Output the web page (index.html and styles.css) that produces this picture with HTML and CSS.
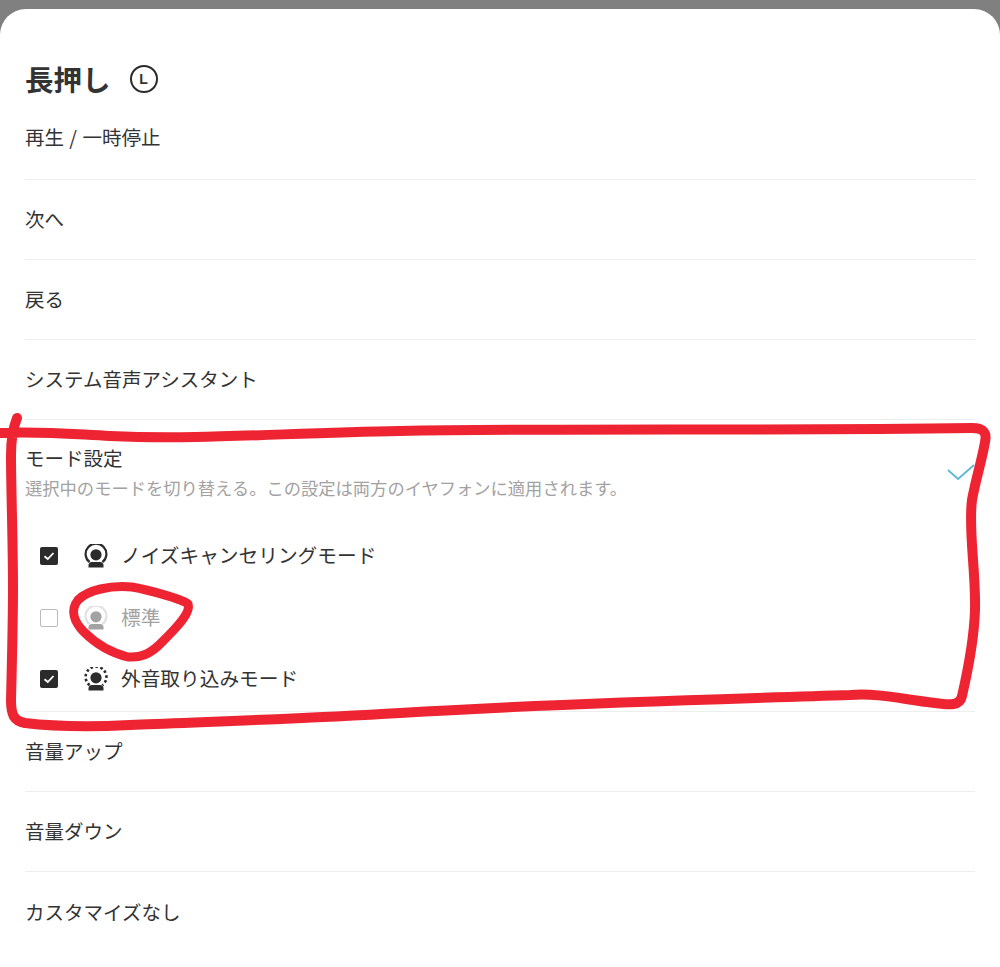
FILE: index.html
```html
<!DOCTYPE html>
<html lang="ja">
<head>
  <meta charset="UTF-8">
  <meta name="viewport" content="width=device-width, initial-scale=1.0">
  <title>長押し</title>
  <link rel="stylesheet" href="styles.css">
</head>
<body>
  <div class="sheet">
    <div class="header">
      <h1>長押し</h1>
      <span class="side-badge">L</span>
    </div>

    <div class="row first-row">再生 / 一時停止</div>
    <div class="row">次へ</div>
    <div class="row">戻る</div>
    <div class="row">システム音声アシスタント</div>

    <div class="row mode-row">
      <div class="mode-title">モード設定</div>
      <div class="mode-desc">選択中のモードを切り替える。この設定は両方のイヤフォンに適用されます。</div>
      <svg class="selected-check" width="30" height="22" viewBox="0 0 30 22">
        <path d="M1 6 L11 15 L27 1" fill="none" stroke="#5bb8d6" stroke-width="1.8"/>
      </svg>

      <div class="options">
        <div class="option">
          <span class="checkbox checked">
            <svg width="14" height="14" viewBox="0 0 14 14"><path d="M2.5 7.2 L5.8 10 L11.5 4" fill="none" stroke="#fff" stroke-width="1.8"/></svg>
          </span>
          <svg class="mode-icon" width="24" height="24" viewBox="0 0 24 24">
            <path d="M5.6 18.2 A10.4 10.4 0 1 1 18.4 18.2" fill="none" stroke="#2b2b2b" stroke-width="2.2"/>
            <circle cx="12" cy="10.8" r="5.6" fill="#2b2b2b"/>
            <path d="M4.5 23.5 V21.5 Q4.5 18 8 18 H16 Q19.5 18 19.5 21.5 V23.5 Z" fill="#2b2b2b"/>
          </svg>
          <span class="option-label">ノイズキャンセリングモード</span>
        </div>
        <div class="option disabled">
          <span class="checkbox"></span>
          <svg class="mode-icon" width="24" height="24" viewBox="0 0 24 24">
            <path d="M5.6 18.2 A10.4 10.4 0 1 1 18.4 18.2" fill="none" stroke="#e2e2e2" stroke-width="2.2"/>
            <circle cx="12" cy="10.8" r="5.6" fill="#a3a3a3"/>
            <path d="M4.5 23.5 V21.5 Q4.5 18 8 18 H16 Q19.5 18 19.5 21.5 V23.5 Z" fill="#a3a3a3"/>
          </svg>
          <span class="option-label">標準</span>
        </div>
        <div class="option">
          <span class="checkbox checked">
            <svg width="14" height="14" viewBox="0 0 14 14"><path d="M2.5 7.2 L5.8 10 L11.5 4" fill="none" stroke="#fff" stroke-width="1.8"/></svg>
          </span>
          <svg class="mode-icon" width="24" height="24" viewBox="0 0 24 24">
            <path d="M5.6 18.2 A10.4 10.4 0 1 1 18.4 18.2" fill="none" stroke="#2b2b2b" stroke-width="2.6" stroke-dasharray="2.6 2.4"/>
            <circle cx="12" cy="10.8" r="5.6" fill="#2b2b2b"/>
            <path d="M4.5 23.5 V21.5 Q4.5 18 8 18 H16 Q19.5 18 19.5 21.5 V23.5 Z" fill="#2b2b2b"/>
          </svg>
          <span class="option-label">外音取り込みモード</span>
        </div>
      </div>
    </div>

    <div class="row">音量アップ</div>
    <div class="row">音量ダウン</div>
    <div class="row last">カスタマイズなし</div>
  </div>

  <!-- red marker drawn over the screenshot -->
  <svg class="markup" width="1000" height="967" viewBox="0 0 1000 967">
    <path d="M0 433 C40 431 70 434 110 436 C200 440 280 433 400 431 C560 428 760 431 972 428 C984 428 987 433 985 442 C982 460 976 478 972 500 C968 530 976 570 975 610 C974 640 968 670 962 696 C960 706 950 705 935 703 C900 699 880 693 850 695 C700 700 560 703 400 713 C300 719 200 722 130 725 C90 727 50 726 25 723 C14 721 11 715 11 700 C12 660 13 620 13 590 C13 540 11 490 11 455 C11 440 13 428 17 418" fill="none" stroke="#ee2433" stroke-width="10" stroke-linecap="round" stroke-linejoin="round"/>
    <path d="M188 604 C184 600 150 590 132 587 C110 585 88 590 78 600 C70 610 74 622 84 632 C96 644 112 653 128 657 C142 658 150 653 158 646 C170 634 192 614 188 604 Z" fill="none" stroke="#ee2433" stroke-width="9" stroke-linecap="round" stroke-linejoin="round"/>
  </svg>
</body>
</html>
```

FILE: styles.css
```css
* {
  box-sizing: border-box;
}
html, body {
  margin: 0;
  padding: 0;
}
body {
  position: relative;
  width: 1000px;
  height: 967px;
  overflow: hidden;
  padding-top: 9px;
  background-color: #808080;
  font-family: "Noto Sans CJK JP", "Noto Sans", sans-serif;
  color: #333;
}
.sheet {
  height: 958px;
  padding: 0 25px;
  background-color: #fff;
  border-radius: 26px 26px 0 0;
}
.header {
  display: flex;
  align-items: center;
  gap: 19px;
  height: 91px;
  padding-top: 48px;
}
h1 {
  margin: 0;
  font-size: 28.5px;
  line-height: 40px;
  font-weight: 700;
}
.side-badge {
  display: flex;
  align-items: center;
  justify-content: center;
  width: 28px;
  height: 28px;
  border: 2px solid #2b2b2b;
  border-radius: 50%;
  font-family: "Liberation Sans", sans-serif;
  font-size: 14px;
  font-weight: 700;
}
.row {
  display: flex;
  align-items: center;
  height: 80px;
  padding-bottom: 2px;
  font-size: 19.5px;
  border-bottom: 1px solid #eee;
}
.row.first-row {
  padding-bottom: 6px;
  word-spacing: 1px;
}
.row.last {
  border-bottom: none;
}
.mode-row {
  position: relative;
  display: block;
  height: 292px;
  padding-top: 24px;
}
.mode-title {
  line-height: 28px;
}
.mode-desc {
  margin-top: 4px;
  font-size: 17.3px;
  line-height: 24px;
  color: #a2a2a2;
}
.selected-check {
  position: absolute;
  right: -2px;
  top: 44px;
}
.options {
  display: flex;
  flex-direction: column;
  gap: 33.5px;
  margin-top: 42px;
  padding-left: 15px;
}
.option {
  display: flex;
  align-items: center;
  height: 28px;
}
.option-label {
  padding-bottom: 3px;
  font-size: 19.7px;
}
.option.disabled {
  color: #a2a2a2;
}
.checkbox {
  display: flex;
  align-items: center;
  justify-content: center;
  width: 18px;
  height: 18px;
  margin-right: 26px;
  border: 1px solid #bbb;
  border-radius: 2px;
  background-color: #fff;
}
.checkbox.checked {
  border: none;
  background-color: #2b2b2b;
}
.mode-icon {
  margin-right: 13px;
}
.markup {
  position: absolute;
  left: 0;
  top: 0;
  pointer-events: none;
}
```
